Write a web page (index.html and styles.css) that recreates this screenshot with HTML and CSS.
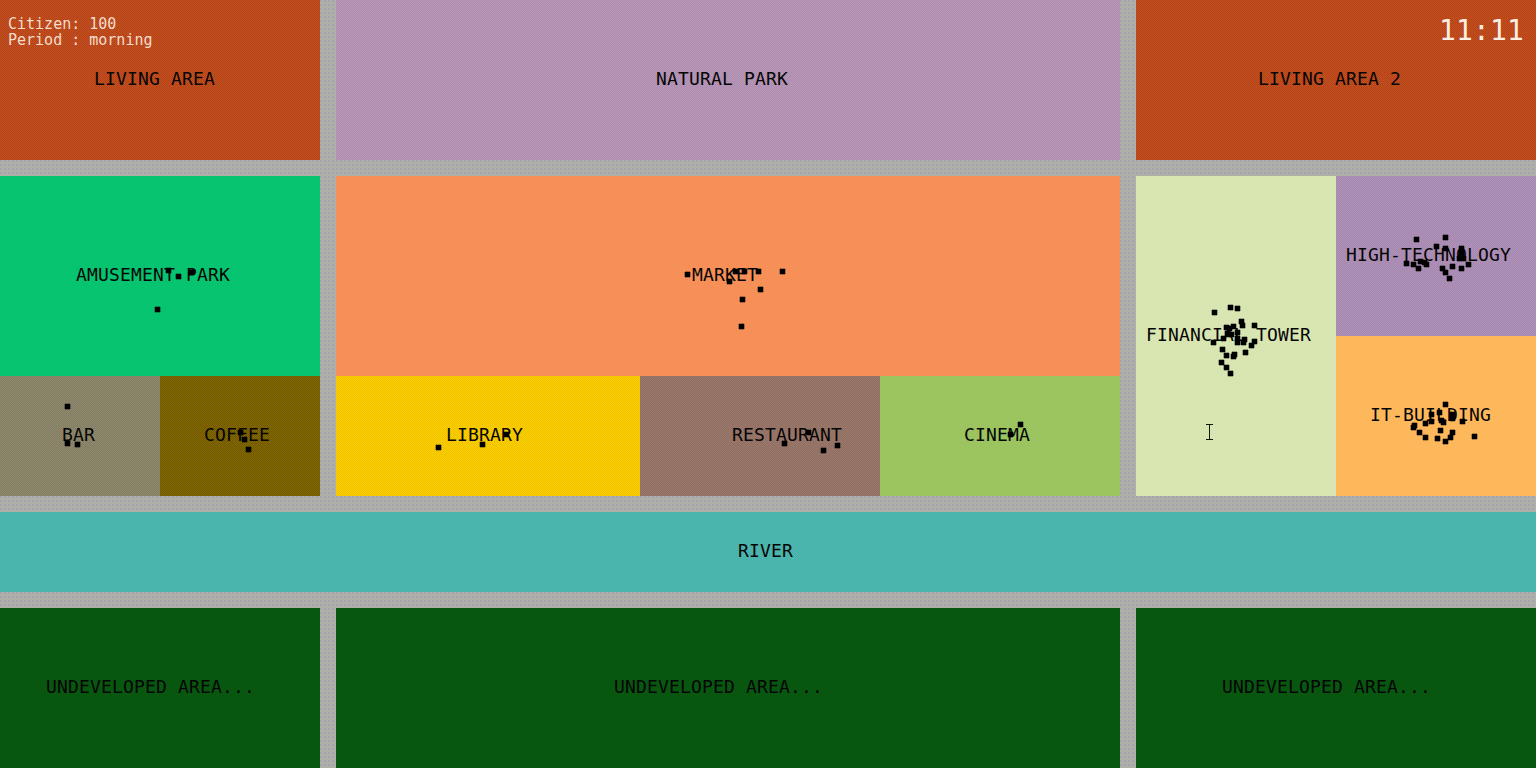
FILE: index.html
```html
<!DOCTYPE html>
<html lang="en">
<head>
<meta charset="utf-8">
<title>City simulation</title>
<link rel="stylesheet" href="styles.css">
</head>
<body>
<main class="city">
  <section class="tile living l-living"><span>LIVING AREA</span></section>
  <section class="tile park l-park"><span>NATURAL PARK</span></section>
  <section class="tile living l-living2"><span>LIVING AREA 2</span></section>

  <div class="district west">
    <section class="tile amusement l-amusement"><span>AMUSEMENT PARK</span></section>
    <section class="tile bar l-bar"><span>BAR</span></section>
    <section class="tile coffee l-coffee"><span>COFFEE</span></section>
  </div>
  <div class="district centre">
    <section class="tile market l-market"><span>MARKET</span></section>
    <div class="shops">
      <section class="tile library l-library"><span>LIBRARY</span></section>
      <section class="tile restaurant l-restaurant"><span>RESTAURANT</span></section>
      <section class="tile cinema l-cinema"><span>CINEMA</span></section>
    </div>
  </div>
  <div class="district east">
    <section class="tile financial l-financial"><span>FINANCIAL TOWER</span></section>
    <div class="offices">
      <section class="tile hightech l-hightech"><span>HIGH-TECHNOLOGY</span></section>
      <section class="tile it l-it"><span>IT-BUILDING</span></section>
    </div>
  </div>

  <section class="tile river l-river"><span>RIVER</span></section>

  <section class="tile wild l-wild1"><span>UNDEVELOPED AREA...</span></section>
  <section class="tile wild l-wild2"><span>UNDEVELOPED AREA...</span></section>
  <section class="tile wild l-wild3"><span>UNDEVELOPED AREA...</span></section>
</main>

<div class="stats">Citizen: 100<br>Period : morning</div>
<div class="clock">11:11</div>

<svg class="citizens" width="1536" height="768" viewBox="0 0 1536 768" aria-hidden="true">
  <path class="dots" d="M1212 310h5v5h-5zM1228 305h5v5h-5zM1235 306h5v5h-5zM1239 319h5v5h-5zM1240 323h5v5h-5zM1252 323h5v5h-5zM1224 325h5v5h-5zM1227 326h5v5h-5zM1231 324h5v5h-5zM1225 331h5v5h-5zM1235 330h5v5h-5zM1229 332h5v5h-5zM1221 336h5v5h-5zM1211 340h5v5h-5zM1235 336h5v5h-5zM1235 340h5v5h-5zM1241 340h5v5h-5zM1242 337h5v5h-5zM1252 339h5v5h-5zM1249 343h5v5h-5zM1220 347h5v5h-5zM1243 350h5v5h-5zM1224 353h5v5h-5zM1231 354h5v5h-5zM1232 352h5v5h-5zM1219 360h5v5h-5zM1224 365h5v5h-5zM1228 371h5v5h-5z"/>
  <path class="dots" d="M1414 237h5v5h-5zM1443 235h5v5h-5zM1434 244h5v5h-5zM1443 246h5v5h-5zM1459 246h5v5h-5zM1459 251h5v5h-5zM1461 256h5v5h-5zM1457 256h5v5h-5zM1404 261h5v5h-5zM1411 262h5v5h-5zM1418 259h5v5h-5zM1424 262h5v5h-5zM1422 260h5v5h-5zM1416 266h5v5h-5zM1440 266h5v5h-5zM1450 264h5v5h-5zM1459 266h5v5h-5zM1466 262h5v5h-5zM1443 270h5v5h-5zM1447 276h5v5h-5z"/>
  <path class="dots" d="M1443 402h5v5h-5zM1429 412h5v5h-5zM1437 410h5v5h-5zM1450 412h5v5h-5zM1450 416h5v5h-5zM1429 419h5v5h-5zM1423 421h5v5h-5zM1439 418h5v5h-5zM1441 420h5v5h-5zM1460 419h5v5h-5zM1412 423h5v5h-5zM1411 425h5v5h-5zM1417 430h5v5h-5zM1423 435h5v5h-5zM1438 428h5v5h-5zM1450 430h5v5h-5zM1448 435h5v5h-5zM1435 436h5v5h-5zM1443 439h5v5h-5zM1472 434h5v5h-5z"/>
  <path class="dots" d="M166 268h5v5h-5zM176 274h5v5h-5zM189 270h5v5h-5zM155 307h5v5h-5zM65 404h5v5h-5zM65 441h5v5h-5zM75 442h5v5h-5zM238 430h5v5h-5zM242 437h5v5h-5zM246 447h5v5h-5z"/>
  <path class="dots" d="M685 272h5v5h-5zM733 269h5v5h-5zM742 269h5v5h-5zM756 269h5v5h-5zM780 269h5v5h-5zM727 279h5v5h-5zM758 287h5v5h-5zM740 297h5v5h-5zM739 324h5v5h-5zM436 445h5v5h-5zM480 442h5v5h-5zM504 432h5v5h-5zM782 441h5v5h-5zM806 430h5v5h-5zM835 443h5v5h-5zM821 448h5v5h-5zM1018 422h5v5h-5zM1008 432h5v5h-5z"/>
  <path class="cursor" d="M1206 424.5h7M1209.5 424.5v15M1206 439.5h7"/>
</svg>
</body>
</html>
```

FILE: styles.css
```css
html, body {
  margin: 0;
  padding: 0;
  overflow: hidden;
}

body {
  position: relative;
  width: 1536px;
  height: 768px;
  font-family: "DejaVu Sans Mono", monospace;
  color: #050505;
}

.city {
  display: grid;
  grid-template-columns: 320px 784px 400px;
  grid-template-rows: 160px 320px 80px 160px;
  gap: 16px;
  width: 1536px;
  height: 768px;
  background:
    radial-gradient(circle at 1px 1px, #a2a4b0 .7px, transparent 1px) 0 0 / 4px 4px,
    #b0aea8;
}

.district { display: grid; min-width: 0; }
.west { grid-template-columns: 160px 160px; grid-template-rows: 200px 120px; }
.west .amusement { grid-column: 1 / 3; }
.centre { grid-template-rows: 200px 120px; }
.shops { display: grid; grid-template-columns: 304px 240px 240px; }
.east { grid-template-columns: 200px 200px; }
.offices { display: grid; grid-template-rows: 160px 160px; }

.tile {
  display: flex;
  align-items: center;
  box-sizing: border-box;
  padding-bottom: 2px;
  font-size: 18px;
  line-height: 22px;
  letter-spacing: .164px;
  white-space: pre;
  background: conic-gradient(var(--a) 25%, var(--b) 0 50%, var(--a) 0 75%, var(--b) 0) 0 0 / 2px 2px;
}

.river { grid-column: 1 / 4; --a: #4fb6b4; --b: #45b2a6; }

.living { --a: #d04c10; --b: #a84628; }
.park { --a: #a98cbc; --b: #bc98ac; }
.amusement { --a: #00c878; --b: #0cc068; }
.bar { --a: #7e7c78; --b: #948a58; }
.coffee { --a: #886800; --b: #6c5800; }
.market { --a: #fc9450; --b: #f08c60; }
.library { --a: #ffcc00; --b: #ecc400; }
.restaurant { --a: #8a6e80; --b: #a07a4e; }
.cinema { --a: #90c070; --b: #a6c84e; }
.financial { --a: #d0e4c0; --b: #e0e6a4; }
.hightech { --a: #a488bc; --b: #b092ac; }
.it { --a: #ffb45c; --b: #fcbc5c; }
.wild { --a: #006010; --b: #104e10; }

.l-living { padding-left: 94px; }
.l-park { padding-left: 320px; }
.l-living2 { padding-left: 122px; }
.l-amusement { padding-left: 76px; }
.l-bar { padding-left: 62px; }
.l-coffee { padding-left: 44px; }
.l-market { padding-left: 356px; }
.l-library { padding-left: 110px; }
.l-restaurant { padding-left: 92px; }
.l-cinema { padding-left: 84px; }
.l-financial { padding-left: 10px; }
.l-hightech { padding-left: 10px; }
.l-it { padding-left: 34px; }
.l-river { padding-left: 738px; }
.l-wild1 { padding-left: 46px; }
.l-wild2 { padding-left: 278px; }
.l-wild3 { padding-left: 86px; }

.stats {
  position: absolute;
  left: 8px;
  top: 16px;
  font-size: 15px;
  line-height: 16px;
  color: #f4dccc;
}

.clock {
  position: absolute;
  right: 12px;
  top: 14px;
  font-size: 28px;
  line-height: 34px;
  letter-spacing: .14px;
  color: #fbeee2;
}

.citizens {
  position: absolute;
  left: 0;
  top: 0;
  display: block;
  pointer-events: none;
}

.dots { fill: #000; stroke: #000; stroke-width: .6; }
.cursor { fill: none; stroke: #0c1a0c; stroke-width: 1; }
```
